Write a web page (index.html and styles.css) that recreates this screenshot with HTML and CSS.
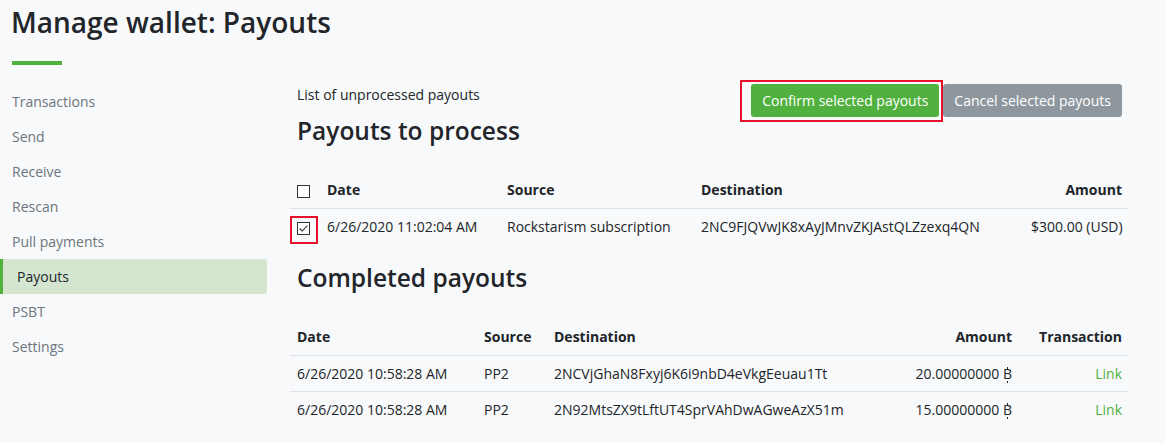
FILE: index.html
```html
<!DOCTYPE html>
<html lang="en">
<head>
<meta charset="utf-8">
<title>Manage wallet: Payouts</title>
<link rel="stylesheet" href="styles.css">
</head>
<body>
<div class="page">
  <header class="page-header">
    <h1 class="title">Manage wallet: Payouts</h1>
    <div class="title-rule"></div>
  </header>
  <div class="layout">
    <nav class="sidenav">
      <a class="nav-item">Transactions</a>
      <a class="nav-item">Send</a>
      <a class="nav-item">Receive</a>
      <a class="nav-item">Rescan</a>
      <a class="nav-item">Pull payments</a>
      <a class="nav-item active">Payouts</a>
      <a class="nav-item">PSBT</a>
      <a class="nav-item">Settings</a>
    </nav>
    <main class="content">
      <div class="top-row">
        <p class="lead-text">List of unprocessed payouts</p>
        <div class="actions">
          <button class="btn btn-primary highlight-btn">Confirm selected payouts</button>
          <button class="btn btn-secondary">Cancel selected payouts</button>
        </div>
      </div>
      <h2 class="section-title">Payouts to process</h2>
      <table class="tbl tbl-process">
        <colgroup>
          <col class="c-cb"><col class="c-date"><col class="c-src"><col class="c-dest"><col class="c-amt">
        </colgroup>
        <thead>
          <tr>
            <th><span class="cb"></span></th>
            <th>Date</th>
            <th>Source</th>
            <th>Destination</th>
            <th class="r">Amount</th>
          </tr>
        </thead>
        <tbody>
          <tr>
            <td><span class="cb checked highlight-cb"><svg viewBox="0 0 13 13" width="11" height="11"><path d="M2 6.5 L5 9.5 L11 3" fill="none" stroke="#333" stroke-width="1.3"/></svg></span></td>
            <td>6/26/2020 11:02:04 AM</td>
            <td>Rockstarism subscription</td>
            <td>2NC9FJQVwJK8xAyJMnvZKJAstQLZzexq4QN</td>
            <td class="r">$300.00 (USD)</td>
          </tr>
        </tbody>
      </table>
      <h2 class="section-title">Completed payouts</h2>
      <table class="tbl tbl-done">
        <colgroup>
          <col class="d-date"><col class="d-src"><col class="d-dest"><col class="d-amt"><col class="d-tx">
        </colgroup>
        <thead>
          <tr>
            <th>Date</th>
            <th>Source</th>
            <th>Destination</th>
            <th class="r">Amount</th>
            <th class="r">Transaction</th>
          </tr>
        </thead>
        <tbody>
          <tr>
            <td>6/26/2020 10:58:28 AM</td>
            <td>PP2</td>
            <td>2NCVjGhaN8Fxyj6K6i9nbD4eVkgEeuau1Tt</td>
            <td class="r">20.00000000 <span class="btc">B</span></td>
            <td class="r"><a class="link">Link</a></td>
          </tr>
          <tr>
            <td>6/26/2020 10:58:28 AM</td>
            <td>PP2</td>
            <td>2N92MtsZX9tLftUT4SprVAhDwAGweAzX51m</td>
            <td class="r">15.00000000 <span class="btc">B</span></td>
            <td class="r"><a class="link">Link</a></td>
          </tr>
        </tbody>
      </table>
    </main>
  </div>
</div>
</body>
</html>
```

FILE: styles.css
```css
* { box-sizing: border-box; }
html, body { margin: 0; padding: 0; }
body {
  background: #ffffff;
  font-family: "Open Sans", "Liberation Sans", sans-serif;
  font-size: 14px;
  color: #212529;
}
.page {
  width: 1166px;
  height: 443px;
  background: #f8f9fa;
  overflow: hidden;
}
.page-header {
  padding: 5px 0 0 11px;
}
.title {
  margin: 0;
  font-size: 28px;
  font-weight: 600;
  line-height: 35px;
  color: #222529;
}
.title-rule {
  width: 50px;
  height: 4px;
  background: #51b13e;
  margin: 21px 0 0 1px;
}
.layout {
  display: flex;
  margin-top: 19px;
}
.sidenav {
  width: 267px;
  flex: none;
  display: flex;
  flex-direction: column;
}
.nav-item {
  display: block;
  height: 35px;
  line-height: 35px;
  padding-left: 12px;
  color: #6c757d;
  font-size: 14px;
}
.nav-item.active {
  background: #d4e6d0;
  border-left: 3px solid #51b13e;
  border-radius: 0 3px 3px 0;
  padding-left: 14px;
  color: #212529;
}
.content {
  margin-left: 23px;
  width: 839px;
}
.top-row {
  display: flex;
  justify-content: space-between;
  align-items: flex-start;
  padding: 0 7px;
  height: 33px;
}
.lead-text {
  margin: 0;
  line-height: 21px;
  color: #212529;
}
.actions {
  display: flex;
  gap: 4px;
}
.btn {
  font-family: inherit;
  font-size: 14px;
  height: 33px;
  padding: 0 11px;
  border: none;
  border-radius: 3px;
  color: #fff;
  line-height: 33px;
}
.btn-primary { background: #51b13e; }
.btn-secondary { background: #8f979e; }
.highlight-btn { position: relative; }
.highlight-btn::after {
  content: "";
  position: absolute;
  top: -4px;
  bottom: -5px;
  left: -11px;
  right: -4px;
  border: 2px solid #e8112d;
}
.section-title {
  margin: 0 7px 28px;
  font-size: 24.5px;
  font-weight: 600;
  line-height: 26px;
  color: #222529;
}
.tbl-process + .section-title { margin-top: 21px; }
.top-row + .section-title { margin-top: 1px; margin-bottom: 28px; }
.tbl {
  width: 839px;
  border-collapse: collapse;
  table-layout: fixed;
}
.tbl th, .tbl td {
  height: 36px;
  padding: 0 7px;
  text-align: left;
  vertical-align: middle;
  white-space: nowrap;
}
.tbl th { font-weight: 700; }
.tbl td { border-top: 1px solid #dfe2e6; }
.tbl .r { text-align: right; }
.c-cb { width: 30px; }
.c-date { width: 180px; }
.c-src { width: 194px; }
.c-dest { width: 330px; }
.c-amt { width: 105px; }
.d-date { width: 187px; }
.d-src { width: 70px; }
.d-dest { width: 353px; }
.d-amt { width: 119px; }
.d-tx { width: 110px; }
.cb {
  position: relative;
  display: inline-flex;
  align-items: center;
  justify-content: center;
  width: 13px;
  height: 13px;
  border: 1px solid #333;
  background: #fff;
  vertical-align: middle;
}
.highlight-cb::after {
  content: "";
  position: absolute;
  top: -7px;
  bottom: -10px;
  left: -8px;
  right: -9px;
  border: 2px solid #e8112d;
}
.btc {
  position: relative;
  display: inline-block;
  line-height: 14px;
}
.btc::before,
.btc::after {
  content: "";
  position: absolute;
  left: 4px;
  width: 1px;
  height: 2px;
  background: currentColor;
}
.btc::before { top: 0; }
.btc::after { bottom: -2px; }
.link { color: #51b13e; }
```
